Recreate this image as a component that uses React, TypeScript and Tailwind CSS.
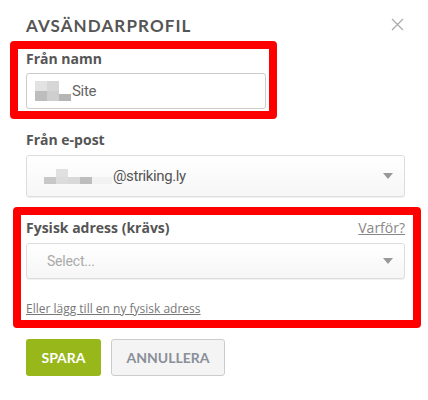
import React from 'react';

const sans = { fontFamily: '"Open Sans", "Liberation Sans", sans-serif' };
const field = { fontFamily: 'Roboto, "Liberation Sans", sans-serif' };
const caps = { fontFamily: 'Lato, "Liberation Sans", sans-serif' };

function Caret() {
  return (
    <svg width="10" height="6" viewBox="0 0 10 6" className="shrink-0">
      <path d="M0 0h10L5 6z" fill="#999" />
    </svg>
  );
}

export default function App() {
  return (
    <div className="w-[428px] h-[400px] bg-white overflow-hidden text-[#555]" style={sans}>
      {/* Header */}
      <div className="h-[35px] flex items-start justify-between pl-[26px] pr-[24px] pt-[17px]">
        <h1 className="text-[17px] font-bold tracking-[1.1px] text-[#555] leading-[18px]" style={caps}>
          AVSÄNDARPROFIL
        </h1>
        <svg width="13" height="13" viewBox="0 0 13 13" className="mt-[1px]">
          <path d="M1 1l11 11M12 1L1 12" stroke="#aaa" strokeWidth="1.2" />
        </svg>
      </div>

      {/* Från namn */}
      <div className="ml-[10px] mt-[6px] w-[267px] border-8 border-[#ff0000] rounded-[4px] pl-[8px] pr-[3px] pb-[2px]">
        <label className="block text-[14px] font-bold leading-[20px] text-[#555]">Från namn</label>
        <div className="mt-[4px] h-[36px] border border-[#ccc] rounded-[3px] flex items-center pl-[8px]">
          <div className="flex flex-col">
            <div className="flex">
              <div className="w-[12px] h-[10px] bg-[#e2e2e2]" />
              <div className="w-[12px] h-[10px] bg-[#d6d6d6]" />
            </div>
            <div className="flex">
              <div className="w-[12px] h-[10px] bg-[#bdbdbd]" />
              <div className="w-[12px] h-[10px] bg-[#cfcfcf]" />
              <div className="w-[12px] h-[7px] mt-[3px] bg-[#b5b5b5]" />
            </div>
          </div>
          <span className="text-[15px] tracking-[-0.3px] text-[#666] ml-[1px]" style={field}>Site</span>
        </div>
      </div>

      {/* Från e-post */}
      <div className="pl-[26px] pr-[23px] mt-[11px]">
        <label className="block text-[14px] font-bold leading-[20px] text-[#555]">Från e-post</label>
        <div className="mt-[5px] h-[42px] border border-[#ddd] rounded-[3px] bg-gradient-to-b from-white to-[#f6f6f6] shadow-[0_1px_1px_rgba(0,0,0,0.06)] flex items-center pl-[17px] pr-[11px]">
          <div className="flex flex-col">
            <div className="flex">
              <div className="w-[12px] h-[8px]" />
              <div className="w-[12px] h-[8px] bg-[#e0e0e0]" />
            </div>
            <div className="flex">
              <div className="w-[12px] h-[7px] bg-[#c8c8c8]" />
              <div className="w-[12px] h-[7px] bg-[#dcdcdc]" />
              <div className="w-[12px] h-[7px] bg-[#d9d9d9]" />
              <div className="w-[12px] h-[7px] bg-[#bdbdbd]" />
              <div className="w-[20px] h-[7px] bg-[#f2f2f2]" />
            </div>
          </div>
          <span className="text-[15px] tracking-[-0.4px] text-[#555] ml-[1px] flex-1" style={field}>
            @striking.ly
          </span>
          <Caret />
        </div>
      </div>

      {/* Fysisk adress */}
      <div className="ml-[13px] mt-[10px] w-[408px] border-8 border-[#ff0000] rounded-[4px] pl-[5px] pr-[8px] pt-[3px] pb-[2px]">
        <div className="flex items-end justify-between">
          <label className="text-[14px] font-bold leading-[20px] text-[#555]">Fysisk adress (krävs)</label>
          <a className="text-[14px] text-[#888] underline leading-[20px]">Varför?</a>
        </div>
        <div className="mt-[5px] h-[36px] border border-[#ddd] rounded-[3px] bg-gradient-to-b from-white to-[#f6f6f6] shadow-[0_1px_1px_rgba(0,0,0,0.06)] flex items-center pl-[20px] pr-[11px]">
          <span className="text-[14px] tracking-[-0.2px] text-[#aaa] flex-1" style={field}>Select...</span>
          <Caret />
        </div>
        <a className="block mt-[21px] text-[12px] text-[#777] underline leading-[18px]">
          Eller lägg till en ny fysisk adress
        </a>
      </div>

      {/* Actions */}
      <div className="flex gap-[10px] pl-[26px] mt-[11px]" style={caps}>
        <button className="w-[75px] h-[37px] rounded-[3px] bg-[#97b71b] text-white text-[14px] font-bold">
          SPARA
        </button>
        <button className="w-[114px] h-[37px] rounded-[3px] bg-[#f4f4f4] border border-[#ccc] text-[#8a8f99] text-[14px] font-bold">
          ANNULLERA
        </button>
      </div>
    </div>
  );
}
